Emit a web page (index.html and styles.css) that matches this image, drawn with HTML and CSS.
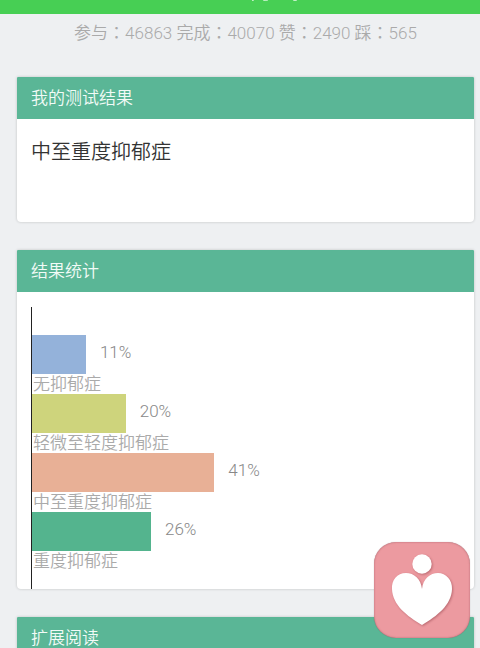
FILE: index.html
```html
<!DOCTYPE html>
<html lang="zh-CN">
<head>
<meta charset="utf-8">
<meta name="viewport" content="width=device-width, initial-scale=1">
<title>测试结果</title>
<link rel="stylesheet" href="styles.css">
</head>
<body>
<header class="topbar">
  <svg class="topbar-marks" width="48" height="3" viewBox="0 0 48 3" aria-hidden="true">
    <path d="M2 .5L4 0M13 0Q15 1 18 0M43 0Q45 1 47 0" fill="none" stroke="#d5f5d8" stroke-width="1"/>
  </svg>
</header>
<main class="page">
  <p class="stats">参与<span class="colon" lang="zh-TW">：</span>46863 完成<span class="colon" lang="zh-TW">：</span>40070 赞<span class="colon" lang="zh-TW">：</span>2490 踩<span class="colon" lang="zh-TW">：</span>565</p>
  <section class="card">
    <h2 class="card-title">我的测试结果</h2>
    <div class="result">中至重度抑郁症</div>
  </section>
  <section class="card">
    <h2 class="card-title">结果统计</h2>
    <div class="chart-wrap">
      <ul class="chart">
        <li>
          <div class="row"><div class="bar blue" style="width:12.6%"></div><span class="percent">11%</span></div>
          <div class="label">无抑郁症</div>
        </li>
        <li>
          <div class="row"><div class="bar olive" style="width:21.9%"></div><span class="percent">20%</span></div>
          <div class="label">轻微至轻度抑郁症</div>
        </li>
        <li>
          <div class="row"><div class="bar peach" style="width:42.6%"></div><span class="percent">41%</span></div>
          <div class="label">中至重度抑郁症</div>
        </li>
        <li>
          <div class="row"><div class="bar green" style="width:27.8%"></div><span class="percent">26%</span></div>
          <div class="label">重度抑郁症</div>
        </li>
      </ul>
    </div>
  </section>
  <section class="card">
    <h2 class="card-title">扩展阅读</h2>
  </section>
</main>
<button class="heart-button" type="button" aria-label="点赞">
  <svg class="heart-icon" viewBox="0 0 96 96" aria-hidden="true">
    <circle cx="48" cy="22" r="9.7"/>
    <path d="M48 47C47 37 40 31 32 31C23 31 17.500 38 18 47C18.500 63 33 74 48 83C63 74 77.500 63 78 47C78.500 38 72 31 64 31C56 31 49 37 48 47Z"/>
  </svg>
</button>
</body>
</html>
```

FILE: styles.css
```css
* {
  box-sizing: border-box;
}

body {
  margin: 0;
  background: #eef0f2;
  color: #333;
  font-family: Roboto, "Noto Sans CJK SC", sans-serif;
  font-size: 17px;
  font-weight: 350;
  line-height: 20px;
}

.topbar {
  display: flex;
  justify-content: center;
  height: 14px;
  padding-left: 68px;
  background: #47cf54;
}

.topbar-marks {
  display: block;
}

.page {
  padding: 8px 6px 0 17px;
}

.stats {
  margin: 0 0 33px;
  line-height: 22px;
  text-align: center;
  color: #aaa;
}

.colon {
  font-family: "Noto Sans CJK TC", sans-serif;
  line-height: 1;
}

.card {
  margin-bottom: 28px;
  overflow: hidden;
  border-radius: 1px 1px 4px 4px;
  background: #fff;
  box-shadow: 0 0 3px rgba(0, 0, 0, 0.2);
}

.card-title {
  margin: 0;
  padding: 0 14px;
  background: #5ab696;
  color: #f2fbf7;
  font-size: 17px;
  font-weight: 350;
  line-height: 42px;
}

.result {
  min-height: 103px;
  padding: 20px 14px;
  font-size: 20px;
  line-height: 26px;
}

.chart-wrap {
  padding: 15px 14px 0;
}

.chart {
  margin: 0;
  padding: 28px 0 18px;
  border-left: 1px solid #222;
  list-style: none;
}

.row {
  display: flex;
  gap: 14px;
  height: 39px;
}

.percent {
  line-height: 34px;
  color: #888;
}

.label {
  padding-left: 1px;
  color: #aaa;
}

.blue {
  background: #94b2da;
}

.olive {
  background: #ced47c;
}

.peach {
  background: #e8b096;
}

.green {
  background: #54b48e;
}

.heart-button {
  position: fixed;
  right: 10px;
  bottom: 10px;
  width: 96px;
  height: 96px;
  padding: 0;
  border: 0;
  border-radius: 22px;
  background: #ec9aa0;
  box-shadow: inset 0 0 2px rgba(130, 60, 70, 0.6), 0 0 1px rgba(90, 50, 60, 0.4);
}

.heart-icon {
  display: block;
  width: 100%;
  fill: #fff;
  filter: drop-shadow(1px 1px 1px rgba(130, 50, 60, 0.45));
}
```
